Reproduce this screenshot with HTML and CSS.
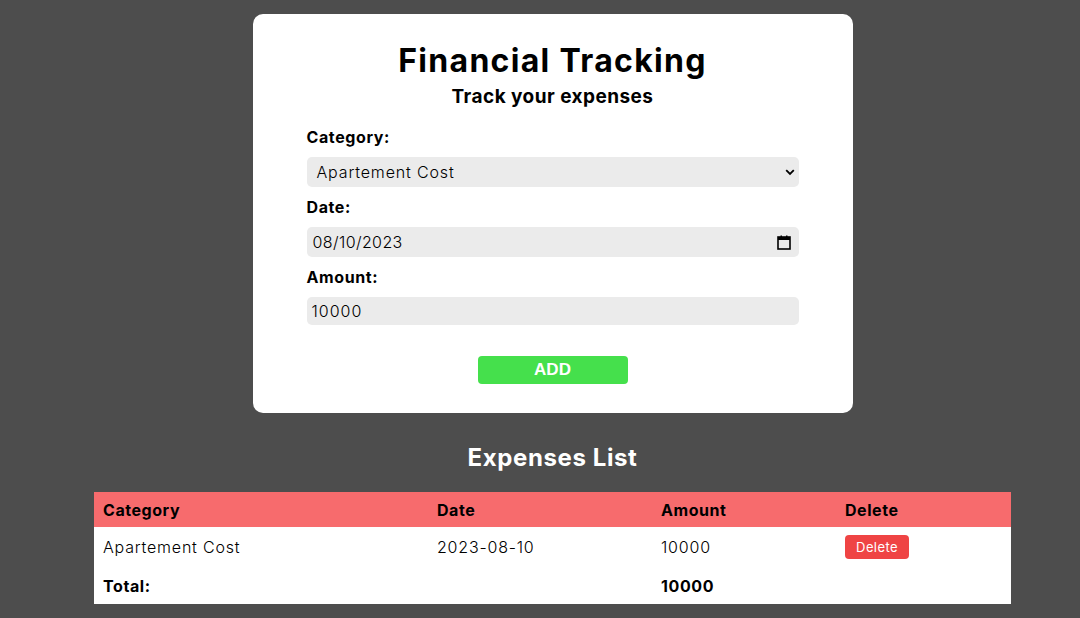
FILE: index.html
```html
<!DOCTYPE html>
<html>
<head>
<meta charset="utf-8">
<link rel="stylesheet" href="styles.css">
</head>
<body>
<div class="page">
  <div class="card">
    <h1 class="title">Financial Tracking</h1>
    <h2 class="subtitle">Track your expenses</h2>
    <label class="label">Category:</label>
    <div class="field select-field">
      <span class="field-text">Apartement Cost</span>
      <svg class="chev" width="10" height="7" viewBox="0 0 10 7"><path d="M1.2 1.2 L5 5 L8.8 1.2" fill="none" stroke="#000" stroke-width="1.8"/></svg>
    </div>
    <label class="label">Date:</label>
    <div class="field date-field">
      <span class="field-text">08/10/2023</span>
      <svg class="cal" width="14" height="15" viewBox="0 0 14 15"><rect x="1" y="2" width="12" height="12" fill="none" stroke="#000" stroke-width="1.6"/><rect x="1" y="2" width="12" height="3" fill="#000"/><rect x="3.5" y="0.5" width="1.5" height="3" fill="#000"/><rect x="9" y="0.5" width="1.5" height="3" fill="#000"/></svg>
    </div>
    <label class="label">Amount:</label>
    <div class="field amount-field">
      <span class="field-text">10000</span>
    </div>
    <div class="actions">
      <button class="add-btn">ADD</button>
    </div>
  </div>

  <h2 class="list-title">Expenses List</h2>
  <table class="expenses">
    <thead>
      <tr class="head-row">
        <th class="c1">Category</th>
        <th class="c2">Date</th>
        <th class="c3">Amount</th>
        <th class="c4">Delete</th>
      </tr>
    </thead>
    <tbody>
      <tr class="body-row">
        <td>Apartement Cost</td>
        <td>2023-08-10</td>
        <td>10000</td>
        <td><button class="del-btn">Delete</button></td>
      </tr>
      <tr class="total-row">
        <td class="bold">Total:</td>
        <td></td>
        <td class="bold">10000</td>
        <td></td>
      </tr>
    </tbody>
  </table>
</div>
</body>
</html>
```
FILE: styles.css
```css
* { box-sizing: border-box; }
body {
  margin: 0;
  background: #4d4d4d;
  font-family: "Inter", "DejaVu Sans", sans-serif;
  color: #000;
}
.page {
  display: flex;
  flex-direction: column;
  align-items: center;
  padding: 14px 0 0 25px;
}
.card {
  width: 600px;
  background: #fff;
  border-radius: 10px;
  padding: 26px 54px 29px;
  display: flex;
  flex-direction: column;
}
.title {
  margin: 0;
  text-align: center;
  font-size: 32px;
  line-height: 42px;
  font-weight: 700;
  letter-spacing: 1.3px;
}
.subtitle {
  margin: 3px 0 0;
  text-align: center;
  font-size: 19px;
  line-height: 24px;
  font-weight: 700;
  letter-spacing: 0.45px;
}
.label {
  display: block;
  font-size: 16px;
  line-height: 20px;
  font-weight: 700;
  margin: 10px 0 10px;
  letter-spacing: 0.6px;
}
.subtitle + .label { margin-top: 18px; }
.field {
  height: 30px;
  background: #ebebeb;
  border-radius: 5px;
  display: flex;
  align-items: center;
  justify-content: space-between;
  font-size: 16px;
  font-weight: 300;
  letter-spacing: 0.7px;
}
.select-field { padding: 0 4px 0 10px; }
.select-field .field-text { letter-spacing: 0.85px; }
.date-field { padding: 0 8px 0 6px; }
.date-field .field-text { letter-spacing: 0.4px; }
.amount-field { height: 28px; padding: 0 5px; }
.amount-field .field-text { letter-spacing: 1px; }
.chev { margin-top: 1px; }
.actions {
  display: flex;
  justify-content: center;
  margin-top: 31px;
}
.add-btn {
  width: 150px;
  height: 28px;
  border: none;
  border-radius: 4px;
  background: #45e04c;
  color: #fff;
  font-family: "Liberation Sans", Arial, sans-serif;
  font-weight: 700;
  font-size: 17px;
  padding: 0;
}
.list-title {
  margin: 30px 0 19px;
  color: #fff;
  font-size: 24px;
  line-height: 30px;
  font-weight: 700;
  letter-spacing: 0.6px;
}
.expenses {
  width: 917px;
  border-collapse: collapse;
  background: #fff;
  font-size: 16px;
}
.expenses th, .expenses td {
  text-align: left;
  padding: 0 9px;
}
.head-row { background: #f76b6d; height: 35px; }
.head-row th { font-weight: 700; letter-spacing: 0.55px; }
.body-row { height: 40px; }
.body-row td { font-weight: 300; letter-spacing: 0.8px; }
.total-row { height: 37px; }
.total-row td { letter-spacing: 0.6px; }
.bold { font-weight: 700; }
.c1 { width: 334px; }
.c2 { width: 224px; }
.c3 { width: 184px; }
.del-btn {
  background: #ef4444;
  color: #fff;
  border: none;
  border-radius: 4px;
  font-family: "Inter", sans-serif;
  font-size: 13px;
  letter-spacing: 0.4px;
  width: 64px;
  height: 24px;
  padding: 0;
  display: block;
}
```
